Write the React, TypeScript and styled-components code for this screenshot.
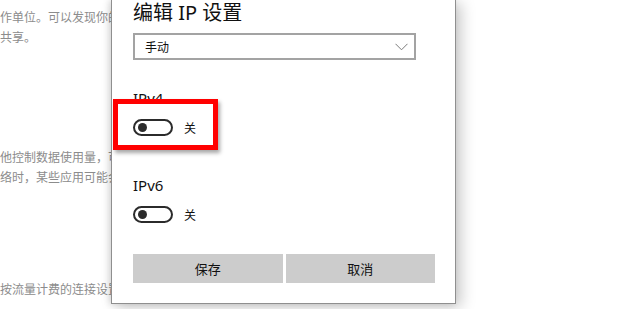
import React, { useState } from 'react';
import styled, { createGlobalStyle } from 'styled-components';

const GlobalStyle = createGlobalStyle`
  html, body {
    margin: 0;
    padding: 0;
    background: #ffffff;
  }
  body {
    font-family: "Noto Sans", "Noto Sans CJK SC", sans-serif;
  }
`;

// 背景里被弹窗挡住的设置页文字
const backgroundGroups: { lines: string[]; gap: number }[] = [
  { lines: ['作单位。可以发现你的设备', '共享。'], gap: 0 },
  { lines: ['他控制数据使用量，可以', '络时，某些应用可能会'], gap: 100 },
  { lines: ['按流量计费的连接设置'], gap: 92 },
];

const Toggle: React.FC<{ on: boolean; onClick: () => void }> = ({ on, onClick }) => (
  <ToggleRow onClick={onClick}>
    <ToggleTrack $on={on}>
      <ToggleKnob $on={on} />
    </ToggleTrack>
    <ToggleLabel>{on ? '开' : '关'}</ToggleLabel>
  </ToggleRow>
);

const App: React.FC = () => {
  const [ipv4, setIpv4] = useState(false);
  const [ipv6, setIpv6] = useState(false);

  return (
    <>
      <GlobalStyle />
      <Screen>
        <SettingsPage>
          {backgroundGroups.map((group, idx) => (
            <TextGroup key={idx} $gap={group.gap}>
              {group.lines.map((line) => (
                <PageLine key={line}>{line}</PageLine>
              ))}
            </TextGroup>
          ))}
        </SettingsPage>

        <Dialog>
          <Title>编辑 IP 设置</Title>
          <Select>
            <span>手动</span>
            <svg width="13" height="8" viewBox="0 0 13 8">
              <polyline points="0.5,0.8 6.5,6.8 12.5,0.8" fill="none" stroke="#7a7a7a" strokeWidth="1" />
            </svg>
          </Select>

          <Section $gap={28}>
            <SectionLabel>IPv4</SectionLabel>
            <Toggle on={ipv4} onClick={() => setIpv4((v) => !v)} />
            <Highlight />
          </Section>

          <Section $gap={39}>
            <SectionLabel>IPv6</SectionLabel>
            <Toggle on={ipv6} onClick={() => setIpv6((v) => !v)} />
          </Section>

          <ButtonRow>
            <DialogButton>保存</DialogButton>
            <DialogButton>取消</DialogButton>
          </ButtonRow>
        </Dialog>
      </Screen>
    </>
  );
};

export default App;

// Styled Components
const Screen = styled.div`
  position: relative;
  width: 620px;
  height: 309px;
  overflow: hidden;
  background: #ffffff;
`;

const SettingsPage = styled.div`
  display: flex;
  flex-direction: column;
  padding-top: 7px;
`;

const TextGroup = styled.div<{ $gap: number }>`
  display: flex;
  flex-direction: column;
  margin-top: ${(props) => props.$gap}px;
`;

const PageLine = styled.div`
  font-family: "Noto Sans CJK SC", sans-serif;
  font-size: 12px;
  line-height: 20px;
  color: #8c8c8c;
  white-space: nowrap;
`;

const Dialog = styled.div`
  position: absolute;
  top: 0;
  left: 111px;
  width: 345px;
  box-sizing: border-box;
  display: flex;
  flex-direction: column;
  padding: 0 20px 20px 21px;
  background: #ffffff;
  border: 1px solid #8f8f8f;
  border-top: none;
  box-shadow: 5px 3px 14px rgba(0, 0, 0, 0.22), -2px 0 6px rgba(0, 0, 0, 0.12);
`;

const Title = styled.div`
  font-size: 20px;
  line-height: 26px;
  color: #111;
`;

const Select = styled.div`
  margin-top: 7px;
  width: 283px;
  height: 27px;
  box-sizing: border-box;
  display: flex;
  align-items: center;
  justify-content: space-between;
  padding: 0 6px 0 10px;
  border: 2px solid #a3a3a3;
  font-family: "Noto Sans CJK SC", sans-serif;
  font-size: 12px;
  color: #111;
`;

const Section = styled.div<{ $gap: number }>`
  position: relative;
  margin-top: ${(props) => props.$gap}px;
  display: flex;
  flex-direction: column;
`;

const SectionLabel = styled.div`
  font-size: 15px;
  line-height: 20px;
  color: #111;
`;

const ToggleRow = styled.div`
  margin-top: 11px;
  display: flex;
  align-items: center;
  gap: 11px;
  cursor: pointer;
`;

const ToggleTrack = styled.div<{ $on: boolean }>`
  width: 40px;
  height: 17px;
  box-sizing: border-box;
  border: 2px solid ${(props) => (props.$on ? '#0078d7' : '#2b2b2b')};
  background: ${(props) => (props.$on ? '#0078d7' : '#ffffff')};
  border-radius: 9px;
  display: flex;
  align-items: center;
  justify-content: ${(props) => (props.$on ? 'flex-end' : 'flex-start')};
  padding: 0 3px;
`;

const ToggleKnob = styled.div<{ $on: boolean }>`
  width: 9px;
  height: 9px;
  border-radius: 50%;
  background: ${(props) => (props.$on ? '#ffffff' : '#2b2b2b')};
`;

const ToggleLabel = styled.span`
  font-family: "Noto Sans CJK SC", sans-serif;
  font-size: 12px;
  color: #111;
`;

const Highlight = styled.div`
  position: absolute;
  top: 11px;
  left: -20px;
  width: 105px;
  height: 51px;
  box-sizing: border-box;
  border: 5px solid #ff0000;
  box-shadow: 2px 3px 4px rgba(0, 0, 0, 0.35);
  pointer-events: none;
`;

const ButtonRow = styled.div`
  margin-top: 31px;
  display: grid;
  grid-template-columns: 1fr 1fr;
  gap: 3px;
`;

const DialogButton = styled.button`
  height: 29px;
  border: none;
  background: #cccccc;
  font-family: "Noto Sans CJK SC", sans-serif;
  font-size: 13px;
  color: #111;
  padding: 0;
  cursor: pointer;
`;
